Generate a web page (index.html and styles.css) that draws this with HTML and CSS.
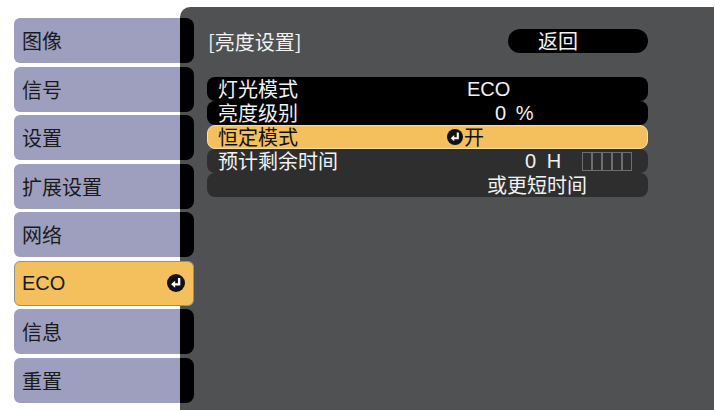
FILE: index.html
```html
<!DOCTYPE html>
<html lang="zh-CN">
<head>
    <meta charset="UTF-8">
    <title>亮度设置</title>
    <link rel="stylesheet" href="styles.css">
</head>
<body>
    <div class="screen">
        <nav class="menu">
            <div class="tab"><span class="tab-label">图像</span><span class="tab-tongue"></span></div>
            <div class="tab"><span class="tab-label">信号</span><span class="tab-tongue"></span></div>
            <div class="tab"><span class="tab-label">设置</span><span class="tab-tongue"></span></div>
            <div class="tab"><span class="tab-label">扩展设置</span><span class="tab-tongue"></span></div>
            <div class="tab"><span class="tab-label">网络</span><span class="tab-tongue"></span></div>
            <div class="tab tab-active">
                <span class="tab-label">ECO</span>
                <svg class="enter-icon" viewBox="0 0 20 20"><circle cx="10" cy="10" r="10" fill="#111"/><path d="M13.5 4.5V11.5H8" fill="none" stroke="#fff" stroke-width="2.6"/><polygon points="4.5,11.5 9,7.6 9,15.4" fill="#fff"/></svg>
            </div>
            <div class="tab"><span class="tab-label">信息</span><span class="tab-tongue"></span></div>
            <div class="tab"><span class="tab-label">重置</span><span class="tab-tongue"></span></div>
        </nav>

        <main class="panel">
            <div class="panel-head">
                <span class="panel-title">[亮度设置]</span>
                <span class="back-btn">返回</span>
            </div>
            <div class="rows">
                <div class="row row-black">
                    <span class="row-label">灯光模式</span>
                    <span class="row-value v-eco">ECO</span>
                </div>
                <div class="row row-black">
                    <span class="row-label">亮度级别</span>
                    <span class="row-value v-level">0 %</span>
                </div>
                <div class="row row-selected">
                    <span class="row-label">恒定模式</span>
                    <span class="row-value v-on"><svg class="enter-icon small" viewBox="0 0 20 20"><circle cx="10" cy="10" r="10" fill="#111"/><path d="M13.5 4.5V11.5H8" fill="none" stroke="#fff" stroke-width="2.6"/><polygon points="4.5,11.5 9,7.6 9,15.4" fill="#fff"/></svg><span>开</span></span>
                </div>
                <div class="row row-disabled">
                    <span class="row-label">预计剩余时间</span>
                    <span class="row-value v-hours">0 H</span>
                    <span class="gauge">
                        <span class="gauge-cell"></span>
                        <span class="gauge-cell"></span>
                        <span class="gauge-cell"></span>
                        <span class="gauge-cell"></span>
                        <span class="gauge-cell"></span>
                    </span>
                </div>
                <div class="row row-disabled">
                    <span class="row-label"></span>
                    <span class="row-value v-note">或更短时间</span>
                </div>
            </div>
        </main>
    </div>
</body>
</html>
```

FILE: styles.css
```css
body, html {
    margin: 0;
    padding: 0;
    width: 100%;
    height: 100%;
    overflow: hidden;
    background: #fff;
    font-family: "Liberation Sans", "Noto Sans CJK SC", sans-serif;
}
.screen {
    display: flex;
    height: 410px;
    padding-top: 7px;
    box-sizing: border-box;
}

/* left menu */
.menu {
    width: 194px;
    padding: 11px 0 0 14px;
    margin-right: -14px;
    box-sizing: border-box;
    position: relative;
    z-index: 1;
    display: flex;
    flex-direction: column;
    gap: 3.5px;
}
.tab {
    display: flex;
    height: 45px;
    flex-shrink: 0;
}
.tab-label {
    flex: 1;
    display: flex;
    align-items: center;
    padding-left: 8px;
    background: #9e9fbe;
    border-radius: 6px 0 0 6px;
    font-size: 20px;
    color: #1a1a1a;
}
.tab-tongue {
    width: 14px;
    background: #000;
    border-radius: 0 8px 8px 0;
}
.tab-active {
    background: #f4bf5d;
    border: 1px solid #8f8f8f;
    border-radius: 6px;
    box-sizing: border-box;
    align-items: center;
}
.tab-active .tab-label {
    background: none;
    padding-left: 7px;
    height: 100%;
}
.enter-icon {
    width: 18px;
    height: 18px;
    margin-right: 8px;
}
.enter-icon.small {
    width: 16px;
    height: 16px;
    margin-right: 1px;
}

/* right panel */
.panel {
    flex: 1;
    margin-right: 1px;
    padding: 22px 66px 0 27px;
    background: #505153;
    border-radius: 10px 0 0 0;
    color: #f2f2f2;
    font-size: 20px;
}
.panel-head {
    display: flex;
    justify-content: space-between;
    align-items: center;
    height: 24px;
}
.panel-title {
    padding-left: 1px;
    font-family: "Noto Sans CJK SC", sans-serif;
}
.back-btn {
    width: 140px;
    height: 24px;
    box-sizing: border-box;
    padding-left: 30px;
    background: #000;
    border-radius: 12px;
    line-height: 24px;
    font-family: "Noto Sans CJK SC", sans-serif;
}
.rows {
    margin-top: 24px;
}
.row {
    display: flex;
    align-items: center;
    height: 24px;
    border-radius: 8px;
    box-sizing: border-box;
    line-height: 24px;
}
.row-black {
    background: #000;
}
.row-selected {
    background: #f4bf5d;
    border: 1px solid #f9dfa6;
    color: #111;
}
.row-disabled {
    background: #2e2e2f;
}
.row-label {
    width: 229px;
    padding-left: 11px;
    flex-shrink: 0;
    font-family: "Noto Sans CJK SC", sans-serif;
}
.row-selected .row-label {
    padding-left: 10px;
}
.row-value {
    display: flex;
    align-items: center;
    white-space: pre;
}
.v-eco {
    padding-left: 20px;
}
.v-level {
    padding-left: 48px;
    word-spacing: 4px;
}
.v-on {
    white-space: normal;
    font-family: "Noto Sans CJK SC", sans-serif;
}
.v-hours {
    padding-left: 78px;
    word-spacing: 5px;
}
.v-note {
    padding-left: 40px;
    font-family: "Noto Sans CJK SC", sans-serif;
}
.gauge {
    display: flex;
    margin-left: 21px;
}
.gauge-cell {
    width: 10px;
    height: 19px;
    box-sizing: border-box;
    border: 1.5px solid #6e6e6e;
}
```
